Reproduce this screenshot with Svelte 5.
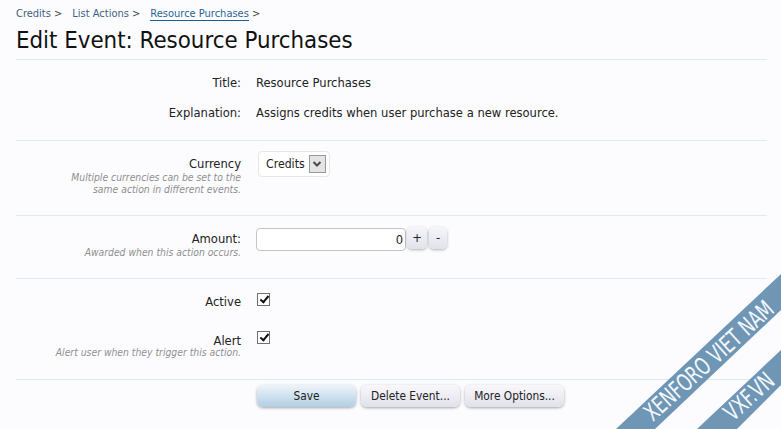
<script>
  let currency = 'Credits';
  let amount = 0;
  let active = true;
  let alert = true;
  const crumbs = ['Credits', 'List Actions', 'Resource Purchases'];
</script>

<main>
  <nav class="crumbs">
    {#each crumbs as crumb, i}
      <span class="crumb" class:current={i === crumbs.length - 1}><a href="#top">{crumb}</a> &gt;</span>
    {/each}
  </nav>
  <h1>Edit Event: Resource Purchases</h1>

  <form on:submit|preventDefault>
    <section class="first">
      <div class="row static">
        <div class="label">Title:</div>
        <div class="value">Resource Purchases</div>
      </div>
      <div class="row static">
        <div class="label">Explanation:</div>
        <div class="value">Assigns credits when user purchase a new resource.</div>
      </div>
    </section>

    <section class="currency">
      <div class="row">
        <div class="label">
          Currency
          <p class="hint">Multiple currencies can be set to the same action in different events.</p>
        </div>
        <div class="value">
          <div class="select">
            <span>{currency}</span>
            <span class="arrow">
              <svg width="10" height="8" viewBox="0 0 10 8"><path d="M1.5 2 L5 5.5 L8.5 2" fill="none" stroke="#4a4a4a" stroke-width="2" /></svg>
            </span>
          </div>
        </div>
      </div>
    </section>

    <section class="amount">
      <div class="row">
        <div class="label">
          Amount:
          <p class="hint">Awarded when this action occurs.</p>
        </div>
        <div class="value spin">
          <input type="text" bind:value={amount} />
          <button type="button" class="step" on:click={() => amount++}>+</button>
          <button type="button" class="step minus" on:click={() => amount--}>-</button>
        </div>
      </div>
    </section>

    <section class="flags">
      <div class="row">
        <div class="label">Active</div>
        <div class="value"><input type="checkbox" class="check" bind:checked={active} /></div>
      </div>
      <div class="row alert">
        <div class="label">
          Alert
          <p class="hint">Alert user when they trigger this action.</p>
        </div>
        <div class="value"><input type="checkbox" class="check" bind:checked={alert} /></div>
      </div>
    </section>

    <div class="actions">
      <button type="submit" class="btn primary">Save</button>
      <button type="button" class="btn">Delete Event...</button>
      <button type="button" class="btn">More Options...</button>
    </div>
  </form>

  <!-- watermark -->
  <svg class="ribbon" width="165" height="155" viewBox="616 274 165 155">
    <polygon points="781,274 781,310 655,429 616,429" fill="#6f96b5" />
    <polygon points="781,350 781,385 737,429 697,429" fill="#6f96b5" />
    <text transform="translate(653,422) rotate(-42)" class="mark" textLength="165" lengthAdjust="spacingAndGlyphs">XENFORO VIET NAM</text>
    <text transform="translate(733,422) rotate(-42)" class="mark" textLength="58" lengthAdjust="spacingAndGlyphs">VXF.VN</text>
  </svg>
</main>

<style>
  :global(body) {
    margin: 0;
    background: #fcfcff;
  }
  main {
    position: relative;
    box-sizing: border-box;
    height: 429px;
    overflow: hidden;
    padding: 7px 14px 0 16px;
    font-family: "DejaVu Sans Condensed", "DejaVu Sans", sans-serif;
    font-size: 12.85px;
    color: #2b2b2b;
    background: #fcfcff;
  }
  .crumbs {
    display: flex;
    gap: 10px;
    height: 15px;
    line-height: 14px;
    font-size: 11px;
    color: #444;
  }
  .crumb a {
    color: #3f5f7f;
    text-decoration: none;
  }
  .crumb.current a {
    color: #2a6496;
    border-bottom: 1px solid #176093;
  }
  h1 {
    margin: 3px 0 0;
    height: 35px;
    line-height: 30px;
    font-size: 23.8px;
    font-weight: normal;
    color: #111;
    border-bottom: 1px solid #dfe9f1;
    box-sizing: border-box;
  }
  section {
    border-bottom: 1px solid #dcebf5;
  }
  .row {
    display: grid;
    grid-template-columns: 225px 1fr;
    column-gap: 15px;
  }
  .label {
    text-align: right;
    line-height: 16px;
    color: #222;
  }
  .value {
    line-height: 16px;
    color: #222;
  }
  .hint {
    margin: 0;
    font-size: 10.3px;
    line-height: 12px;
    font-style: italic;
    color: #8f8f8f;
  }
  .first {
    height: 81px;
    padding-top: 15px;
    box-sizing: border-box;
  }
  .static {
    height: 30px;
  }
  .currency {
    height: 75px;
    padding-top: 15px;
    box-sizing: border-box;
  }
  .currency .hint {
    margin-left: 40px;
    margin-top: -1px;
  }
  .select {
    display: inline-flex;
    align-items: center;
    gap: 4px;
    margin: -5px 0 0 2px;
    height: 24px;
    padding: 0 3px 0 7px;
    border: 1px solid #e6e6e6;
    border-radius: 4px;
    background: #fff;
    font-size: 12.2px;
  }
  .arrow {
    display: flex;
    align-items: center;
    justify-content: center;
    width: 15px;
    height: 16px;
    border: 1px solid #9a9a9a;
    background: #e4e4e4;
  }
  .amount {
    height: 63px;
    padding-top: 15px;
    box-sizing: border-box;
  }
  .amount .hint {
    margin-top: -1px;
  }
  .spin {
    display: flex;
    align-items: flex-start;
    margin-top: -3px;
  }
  .spin input {
    box-sizing: border-box;
    width: 150px;
    height: 23px;
    padding: 0 2px 0 0;
    border: 1px solid #c4c4c4;
    border-radius: 4px;
    background: #fff;
    text-align: right;
    font: inherit;
    color: #222;
    outline: none;
  }
  .step {
    width: 20px;
    height: 22px;
    margin: -1px 0 0 1px;
    padding: 0;
    border: none;
    border-radius: 5px;
    background: linear-gradient(#f5f5fa, #e2e2ec);
    box-shadow: 0 1px 3px rgba(0, 0, 0, 0.3);
    font: inherit;
    color: #222;
  }
  .step.minus {
    width: 18px;
    margin-left: 2px;
  }
  .flags {
    height: 101px;
    padding-top: 14px;
    box-sizing: border-box;
    border-bottom-color: #dfe9f1;
  }
  .flags .row {
    height: 38px;
  }
  .flags .label {
    padding-top: 1px;
  }
  .flags .alert .label {
    padding-top: 2px;
  }
  .flags .alert .hint {
    margin-top: -3px;
  }
  .check {
    appearance: none;
    position: relative;
    box-sizing: border-box;
    display: block;
    width: 13px;
    height: 13px;
    margin: 0 0 0 1px;
    border: 1px solid #707070;
    background: #fff;
  }
  .check:checked::after {
    content: "";
    position: absolute;
    left: 3.5px;
    top: 0;
    width: 3px;
    height: 7px;
    border: solid #111;
    border-width: 0 2px 2px 0;
    transform: rotate(40deg);
  }
  .actions {
    display: flex;
    gap: 5px;
    padding: 5px 0 0 241px;
  }
  .btn {
    box-sizing: border-box;
    width: 99px;
    height: 22px;
    padding: 0;
    border: none;
    border-radius: 6px;
    background: linear-gradient(#f8f8fb, #e1e1eb);
    box-shadow: 0 1px 3px rgba(0, 0, 0, 0.35);
    font: inherit;
    font-size: 11.8px;
    color: #222;
  }
  .btn.primary {
    background: linear-gradient(#eef4f9, #b0cfe4);
  }
  .ribbon {
    position: absolute;
    right: 0;
    bottom: 0;
  }
  .mark {
    font-family: "DejaVu Sans Condensed", "DejaVu Sans", sans-serif;
    font-size: 24px;
    fill: #f4f8fb;
  }
</style>
